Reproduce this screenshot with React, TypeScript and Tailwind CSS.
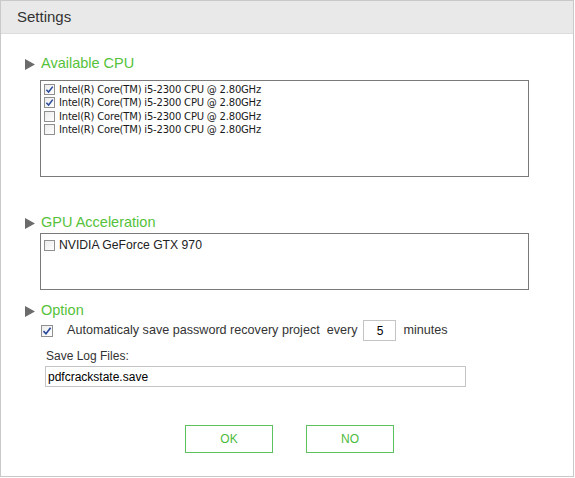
import React from 'react'

const cpus = [
  { name: 'Intel(R) Core(TM) i5-2300 CPU @ 2.80GHz', checked: true },
  { name: 'Intel(R) Core(TM) i5-2300 CPU @ 2.80GHz', checked: true },
  { name: 'Intel(R) Core(TM) i5-2300 CPU @ 2.80GHz', checked: false },
  { name: 'Intel(R) Core(TM) i5-2300 CPU @ 2.80GHz', checked: false },
]

function Check({ checked, size = 11 }: { checked: boolean; size?: number }) {
  return (
    <span
      className="flex shrink-0 items-center justify-center border border-[#8f8f8f] bg-gradient-to-br from-[#ececec] to-white"
      style={{ width: size, height: size }}
    >
      {checked && (
        <svg width={size - 2} height={size - 2} viewBox="0 0 10 10">
          <path d="M1.5 5.2 L4 7.8 L8.6 1.8" fill="none" stroke="#2a4a9c" strokeWidth="1.7" />
        </svg>
      )}
    </span>
  )
}

function Section({ title }: { title: string }) {
  return (
    <div className="flex items-center h-[18px]">
      <svg width="10" height="11" viewBox="0 0 10 11" className="ml-[24px]">
        <path d="M0 0 L10 5.5 L0 11 Z" fill="#6b6b6b" />
      </svg>
      <span className="ml-[6px] text-[14.5px] text-[#55c23a]">{title}</span>
    </div>
  )
}

export default function App() {
  return (
    <div className="w-[575px] h-[478px] bg-white font-['Liberation_Sans',Arial,sans-serif]">
      <div className="w-[574px] h-[477px] border border-[#c9c9c9] flex flex-col">
        <div className="h-[33px] bg-[#e9e9e9] border-b border-[#dcdcdc] flex items-center pl-[16px] text-[15px] text-[#333]">
          Settings
        </div>

        <div className="mt-[21px]">
          <Section title="Available CPU" />
        </div>
        <div className="ml-[39px] mt-[7px] w-[489px] h-[97px] border border-[#7a7a7a] pt-[2px]">
          {cpus.map((c, i) => (
            <div key={i} className="flex items-center h-[13.3px] pl-[3px] gap-[4px] font-['DejaVu_Sans',sans-serif] text-[10px] tracking-[-0.2px] text-[#1a1a1a]">
              <Check checked={c.checked} />
              <span>{c.name}</span>
            </div>
          ))}
        </div>

        <div className="mt-[37px]">
          <Section title="GPU Acceleration" />
        </div>
        <div className="ml-[39px] mt-[1px] w-[489px] h-[57px] border border-[#7a7a7a] pt-[2px]">
          <div className="flex items-center pl-[3px] gap-[4px] text-[12.2px] text-[#222]">
            <Check checked={false} />
            <span>NVIDIA GeForce GTX 970</span>
          </div>
        </div>

        <div className="mt-[12px]">
          <Section title="Option" />
        </div>
        <div className="ml-[40px] mt-0 flex items-center text-[12.6px] text-[#333]">
          <Check checked={true} size={12} />
          <span className="ml-[14px]">Automaticaly save password recovery project</span>
          <span className="ml-[7px]">every</span>
          <input
            readOnly
            value="5"
            className="ml-[6px] w-[33px] h-[21px] border border-[#c4c4c4] text-center text-[12px] text-black outline-none"
          />
          <span className="ml-[7px]">minutes</span>
        </div>
        <div className="ml-[45px] mt-[6px] text-[12px] text-[#333]">Save Log Files:</div>
        <input
          readOnly
          value="pdfcrackstate.save"
          className="ml-[44px] mt-[1px] w-[421px] h-[21px] border border-[#c4c4c4] px-[2px] text-[12px] text-black outline-none"
        />

        <div className="mt-[38px] flex gap-[33px] pl-[184px]">
          <button className="w-[88px] h-[28px] border border-[#5dc25d] text-[12px] text-[#4cbb3c] bg-white">OK</button>
          <button className="w-[88px] h-[28px] border border-[#5dc25d] text-[12px] text-[#4cbb3c] bg-white">NO</button>
        </div>
      </div>
    </div>
  )
}
